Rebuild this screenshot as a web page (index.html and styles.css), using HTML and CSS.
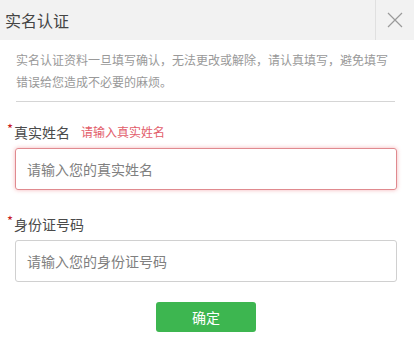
FILE: index.html
```html
<!DOCTYPE html>
<html lang="zh">
<head>
<meta charset="utf-8">
<link rel="stylesheet" href="styles.css">
</head>
<body>
<div class="dialog">
  <div class="header">
    <div class="title">实名认证</div>
    <div class="close">
      <svg width="16" height="16" viewBox="0 0 16 16"><path d="M1 1L15 15M15 1L1 15" stroke="#9a9a9a" stroke-width="1.2" fill="none"/></svg>
    </div>
  </div>
  <div class="body">
    <p class="desc">实名认证资料一旦填写确认，无法更改或解除，请认真填写，避免填写<br>错误给您造成不必要的麻烦。</p>
    <div class="rule"></div>
    <div class="field">
      <div class="label"><span class="star">*</span>真实姓名<span class="error">请输入真实姓名</span></div>
      <div class="input invalid">请输入您的真实姓名</div>
    </div>
    <div class="field">
      <div class="label"><span class="star">*</span>身份证号码</div>
      <div class="input">请输入您的身份证号码</div>
    </div>
    <div class="actions"><button class="btn">确定</button></div>
  </div>
</div>
</body>
</html>
```
FILE: styles.css
```css
html, body {
  margin: 0;
  padding: 0;
  background: #fff;
}
body {
  font-family: "Noto Sans CJK SC", "Liberation Sans", sans-serif;
  width: 414px;
  height: 348px;
  overflow: hidden;
}
.header {
  height: 40px;
  background: #f2f2f2;
  display: flex;
  align-items: stretch;
}
.title {
  flex: 1;
  padding-left: 5px;
  font-size: 16px;
  line-height: 40px;
  color: #444;
}
.close {
  width: 38px;
  border-left: 1px solid #e0e0e0;
  display: flex;
  align-items: center;
  justify-content: center;
}
.body {
  padding: 9px 17px 0 15px;
}
.desc {
  margin: 0 -12px 0 1px;
  font-size: 12px;
  line-height: 22px;
  color: #999;
  letter-spacing: 0;
  white-space: nowrap;
}
.rule {
  height: 1px;
  background: #d5d5d5;
  margin: 8px 2px 0 1px;
}
.field {
  margin-top: 20px;
}
.field + .field {
  margin-top: 24px;
}
.label {
  margin-left: -8px;
  font-size: 14px;
  line-height: 20px;
  color: #4a4a4a;
  display: flex;
  align-items: center;
}
.star {
  color: #c8161d;
  font-size: 13px;
  width: 7px;
  align-self: flex-start;
  line-height: 14px;
}
.error {
  margin-left: 11px;
  font-size: 12px;
  color: #e25c6a;
}
.input {
  margin-top: 6px;
  height: 40px;
  border: 1px solid #d0d0d0;
  border-radius: 3px;
  padding-left: 11px;
  font-size: 14px;
  line-height: 40px;
  color: #808080;
}
.input.invalid {
  border-color: #e08a8f;
  box-shadow: 0 0 4px rgba(230, 90, 100, 0.45);
}
.actions {
  margin-top: 20px;
  display: flex;
  justify-content: center;
}
.btn {
  width: 100px;
  height: 30px;
  border: none;
  border-radius: 3px;
  background: #3db650;
  color: #fff;
  font-family: "Noto Sans CJK SC", "Liberation Sans", sans-serif;
  font-size: 14px;
  padding: 0;
}
```
